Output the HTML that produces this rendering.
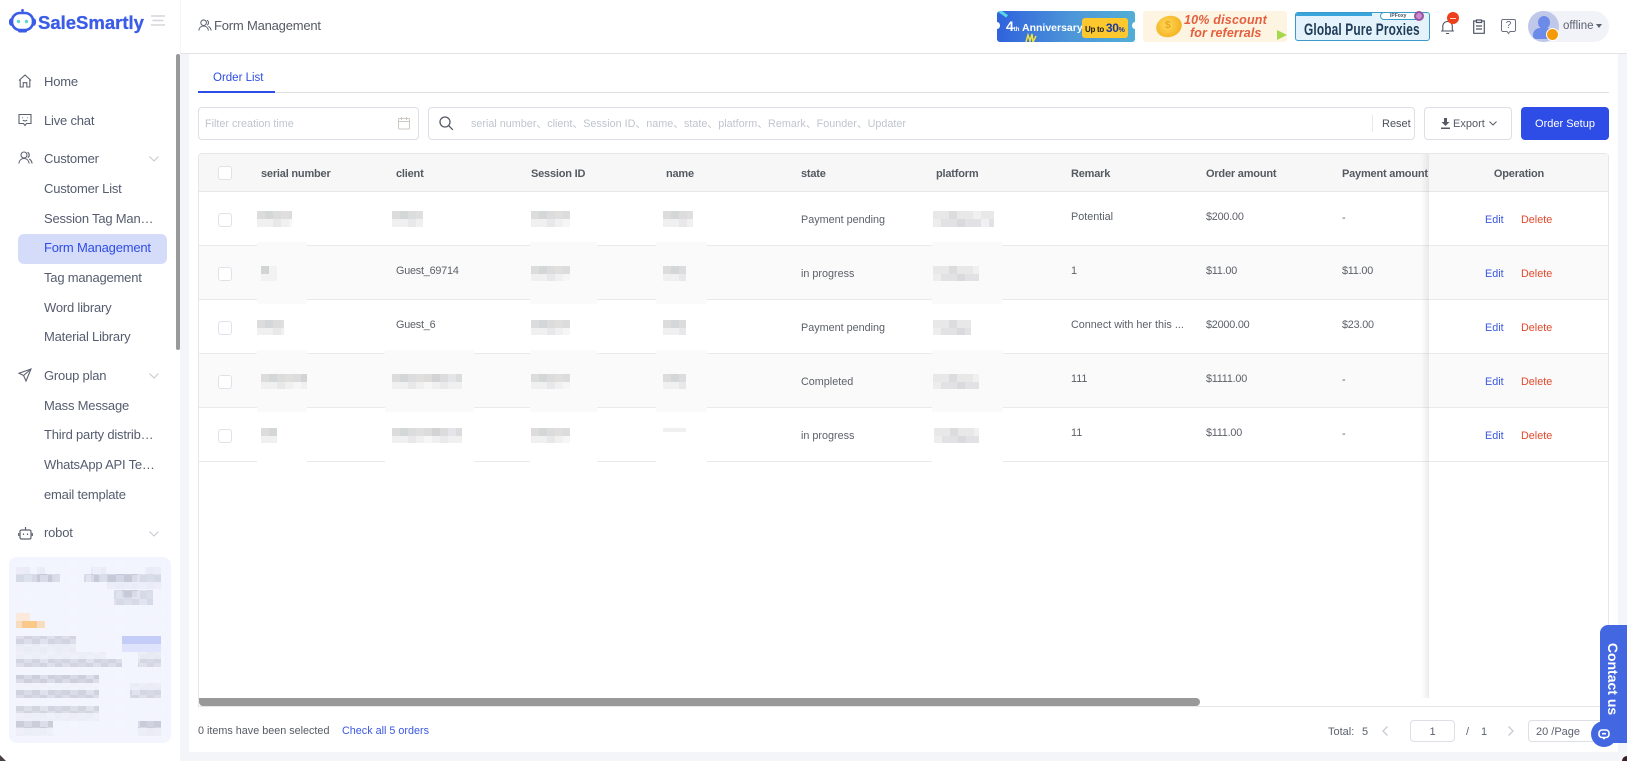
<!DOCTYPE html>
<html lang="en"><head><meta charset="utf-8"><title>Form Management</title>
<style>
*{box-sizing:border-box}
html,body{margin:0;padding:0;width:1627px;height:761px;overflow:hidden;background:#f4f5f8;font-family:"Liberation Sans","Noto Sans CJK SC",sans-serif;color:#5a6070}
.a{position:absolute}
.t{position:absolute;white-space:nowrap;line-height:16px;height:16px}
.n{font-size:13px;letter-spacing:-.2px;color:#545c6e}
.h{font-size:11px;letter-spacing:-.2px;font-weight:bold;color:#555a62}
.c{font-size:10.8px;color:#5c6068}
.d{letter-spacing:-.2px}
.cb{position:absolute;width:14px;height:14px;border:1.5px solid #dfe2ea;border-radius:3px;background:#fff}
.ed{font-size:10.8px;color:#3a58e0}
.de{font-size:10.8px;color:#e0492c}
.box{position:absolute;background:#fff;border:1px solid #dcdfe6;border-radius:4px}
svg{position:absolute;overflow:visible}
</style></head><body>

<!-- main white -->
<div class="a" style="left:189px;top:54px;width:1429px;height:698px;background:#fff"></div>
<!-- sidebar -->
<div class="a" style="left:0;top:0;width:180px;height:761px;background:#fff"></div>
<div class="a" style="left:176px;top:54px;width:4px;height:296px;background:#999;border-radius:2px"></div>
<!-- header -->
<div class="a" style="left:180px;top:0;width:1447px;height:54px;background:#fff;border-bottom:1px solid #e2e3e6;border-left:1px solid #f4f4f6"></div>

<!-- logo -->
<svg style="left:9px;top:9px" width="28" height="24" viewBox="0 0 28 24">
<path d="M13.500 0v4" stroke="#3a5ce6" stroke-width="1.600"/><circle cx="13.500" cy="1.500" r="1.400" fill="#3a5ce6"/>
<rect x="0" y="9" width="27" height="8" rx="3" fill="#3a5ce6"/>
<rect x="3" y="4" width="21" height="17" rx="8" fill="#fff" stroke="#3a5ce6" stroke-width="2.600"/>
<rect x="9" y="21" width="9" height="2.500" rx="1.200" fill="#3a5ce6"/>
<circle cx="9.500" cy="12.500" r="1.700" fill="#5fd6cf"/><circle cx="17.500" cy="12.500" r="1.700" fill="#5fd6cf"/>
</svg>
<div class="t" style="left:38px;top:13px;height:20px;line-height:20px;font-size:18.500px;font-weight:bold;color:#3a5ce6;-webkit-text-stroke:.3px #3a5ce6">SaleSmartly</div>
<svg style="left:151px;top:15px" width="14" height="12"><path d="M0 1h14M1.500 5.500h11M0 10h14" stroke="#d4d6dc" stroke-width="1.500"/></svg>

<!-- sidebar icons -->
<svg style="left:18px;top:74px" width="14" height="14" viewBox="0 0 14 14" fill="none" stroke="#5d6270" stroke-width="1.100"><path d="M1 6.500 7 1l6 5.500M2.200 5.500V13h3V8.700h3.600V13h3V5.500"/></svg>
<svg style="left:18px;top:113px" width="14" height="14" viewBox="0 0 14 14" fill="none" stroke="#5d6270" stroke-width="1.100"><path d="M1 1.500h12v9H8.500L7 12.500 5.500 10.500H1z"/><path d="M4.500 4.500v.8M9.500 4.500v.8M4.800 7.200c1.400 1 3 1 4.400 0"/></svg>
<svg style="left:18px;top:151px" width="15" height="14" viewBox="0 0 15 14" fill="none" stroke="#5d6270" stroke-width="1.100"><circle cx="6" cy="4" r="3"/><path d="M.8 12.500C1.200 9.500 3.200 7.500 6 7.500s4.800 2 5.200 5M9.500 1.300a3 3 0 0 1 .3 5.300M11.200 8c1.600.8 2.600 2.400 2.900 4.500"/></svg>
<svg style="left:18px;top:368px" width="14" height="14" viewBox="0 0 14 14" fill="none" stroke="#5d6270" stroke-width="1.100"><path d="M13 1 1 5.200l4.600 2.300L8 13z"/><path d="M13 1 5.600 7.500"/></svg>
<svg style="left:18px;top:526px" width="15" height="14" viewBox="0 0 15 14" fill="none" stroke="#5d6270" stroke-width="1.200"><rect x="2" y="4" width="11" height="9" rx="1.500"/><path d="M7.500 1v3M.7 7v3M14.300 7v3M5.500 7.500v1.500M9.500 7.500v1.500"/></svg>

<!-- sidebar text -->
<div class="t n" style="left:44px;top:74px">Home</div>
<div class="t n" style="left:44px;top:113px">Live chat</div>
<div class="t n" style="left:44px;top:151px">Customer</div>
<div class="t n" style="left:44px;top:181px">Customer List</div>
<div class="t n" style="left:44px;top:211px">Session Tag Man…</div>
<div class="a" style="left:18px;top:234px;width:149px;height:30px;background:#d5dcfa;border-radius:6px"></div>
<div class="t n" style="left:44px;top:240px;color:#2e4de6">Form Management</div>
<div class="t n" style="left:44px;top:270px">Tag management</div>
<div class="t n" style="left:44px;top:300px">Word library</div>
<div class="t n" style="left:44px;top:329px">Material Library</div>
<div class="t n" style="left:44px;top:368px">Group plan</div>
<div class="t n" style="left:44px;top:398px">Mass Message</div>
<div class="t n" style="left:44px;top:427px">Third party distrib…</div>
<div class="t n" style="left:44px;top:457px">WhatsApp API Te…</div>
<div class="t n" style="left:44px;top:487px">email template</div>
<div class="t n" style="left:44px;top:525px">robot</div>
<svg style="left:149px;top:156px" width="10" height="6" fill="none" stroke="#c8cbd2" stroke-width="1.100"><path d="M.5.500 5 5 9.500.5"/></svg>
<svg style="left:149px;top:373px" width="10" height="6" fill="none" stroke="#c8cbd2" stroke-width="1.100"><path d="M.5.500 5 5 9.500.5"/></svg>
<svg style="left:149px;top:531px" width="10" height="6" fill="none" stroke="#c8cbd2" stroke-width="1.100"><path d="M.5.500 5 5 9.500.5"/></svg>

<!-- promo card mosaic -->
<div class="a" style="left:9px;top:557px;width:162px;height:186px;background:#f3f5fe;border-radius:8px"></div>
<svg style="left:0;top:0" width="180" height="761">
<defs>
<pattern id="v" x="16" y="567" width="46" height="16" patternUnits="userSpaceOnUse">
<rect x="0" y="0" width="8" height="8" fill="#f3f5fe" fill-opacity=".32"/>
<rect x="16" y="0" width="8" height="8" fill="#f3f5fe" fill-opacity=".18"/>
<rect x="31" y="0" width="8" height="8" fill="#f3f5fe" fill-opacity=".38"/>
<rect x="8" y="8" width="8" height="8" fill="#f3f5fe" fill-opacity=".28"/>
<rect x="24" y="8" width="8" height="8" fill="#f3f5fe" fill-opacity=".42"/>
<rect x="39" y="8" width="7" height="8" fill="#f3f5fe" fill-opacity=".15"/>
</pattern>
</defs>
<g fill="#e9ebf6"><rect x="16" y="567" width="14" height="7"/><rect x="37" y="567" width="8" height="7"/><rect x="91" y="567" width="15" height="7"/><rect x="145" y="567" width="16" height="7"/><rect x="107" y="582" width="54" height="7"/></g>
<g fill="#d6d9e6"><rect x="16" y="574" width="44" height="8"/><rect x="84" y="574" width="77" height="8"/><rect x="114" y="590" width="39" height="15"/></g>
<g fill="#c6cad8"><rect x="37" y="574" width="15" height="8"/><rect x="91" y="574" width="8" height="8"/><rect x="107" y="574" width="30" height="8"/><rect x="122" y="590" width="15" height="7"/></g>
<rect x="16" y="636" width="60" height="8" fill="#d2d5e1"/><rect x="16" y="644" width="60" height="8" fill="#e9ebf5"/>
<rect x="16" y="652" width="90" height="7" fill="#eceef7"/><rect x="16" y="659" width="106" height="8" fill="#d2d5e1"/><rect x="138" y="652" width="23" height="7" fill="#e6e8f2"/><rect x="138" y="659" width="23" height="8" fill="#d4d6e2"/>
<rect x="16" y="675" width="83" height="8" fill="#cdd0dc"/><rect x="16" y="683" width="83" height="7" fill="#f0f2fb"/><rect x="16" y="690" width="83" height="8" fill="#d0d3df"/><rect x="130" y="683" width="31" height="7" fill="#e9ebf5"/><rect x="130" y="690" width="31" height="8" fill="#d4d6e2"/>
<rect x="16" y="706" width="83" height="7" fill="#d2d5df"/><rect x="16" y="713" width="83" height="8" fill="#eceef7"/><rect x="16" y="721" width="37" height="7" fill="#cbced9"/><rect x="16" y="728" width="37" height="8" fill="#eceef7"/><rect x="138" y="721" width="23" height="7" fill="#c9ccd8"/><rect x="138" y="728" width="23" height="8" fill="#e9ebf5"/>
<rect x="10" y="560" width="155" height="180" fill="url(#v)"/>
<rect x="16" y="613" width="14" height="8" fill="#fbeadb"/><rect x="16" y="621" width="29" height="7" fill="#f8dcc0"/><rect x="22" y="621" width="15" height="7" fill="#fbc88c"/>
<rect x="122" y="636" width="39" height="8" fill="#c4ccf8"/><rect x="122" y="644" width="39" height="8" fill="#dfe3fb"/>
</svg>

<!-- header content -->
<svg style="left:198px;top:19px" width="14" height="13" viewBox="0 0 15 14" fill="none" stroke="#5d6270" stroke-width="1.100"><circle cx="6" cy="4" r="3"/><path d="M.8 12.500C1.200 9.500 3.200 7.500 6 7.500s4.800 2 5.200 5M9.500 1.300a3 3 0 0 1 .3 5.300M11.200 8c1.600.8 2.600 2.400 2.900 4.500"/></svg>
<div class="t" style="left:214px;top:18px;font-size:13px;letter-spacing:-.2px;color:#555a64">Form Management</div>

<!-- banner 1 -->
<div class="a" style="left:997px;top:11px;width:138px;height:31px;border-radius:3px;background:linear-gradient(90deg,#2f62dc,#4d97d8 55%,#52aed6);overflow:hidden">
<div class="a" style="left:1px;top:1px;width:10px;height:3px;background:#56d6e6;transform:rotate(35deg)"></div>
<div class="t" style="left:9px;top:7px;font-size:10.500px;font-weight:bold;color:#fff"><span style="font-size:14px">4</span><span style="font-size:6px">th</span> Anniversary</div>
<div class="a" style="left:85px;top:7px;width:46px;height:20px;background:#fcc82e;border-radius:3px"></div>
<div class="t" style="left:88px;top:9px;font-size:8px;font-weight:bold;color:#1a1a1a;letter-spacing:-.3px">Up to <span style="font-size:12px;color:#1c3a9e">30<span style="font-size:7px">%</span></span></div>
<svg style="left:28px;top:23px" width="12" height="8" fill="none" stroke="#f2e23c" stroke-width="1.500"><path d="M1 8 3 1l2 6 2-7 1 8 3-6"/></svg>
</div>
<div class="a" style="left:994px;top:22px;width:6px;height:7px;background:#fff;border-radius:50%"></div>
<div class="a" style="left:1132px;top:22px;width:6px;height:7px;background:#fff;border-radius:50%"></div>

<!-- banner 2 -->
<div class="a" style="left:1143px;top:11px;width:144px;height:31px;border-radius:3px;background:#fdf4e2;overflow:hidden">
<div class="a" style="left:13px;top:5px;width:26px;height:21px;border-radius:50%;background:radial-gradient(circle at 45% 40%,#ffd95c,#f5b423 70%,#e89a18);transform:rotate(-18deg)"></div>
<div class="t" style="left:22px;top:7px;font-size:10px;font-weight:bold;color:#e9a51d">$</div>
<div class="t" style="left:41px;top:3px;height:13px;line-height:13px;font-size:12.500px;font-weight:bold;font-style:italic;color:#e35f3e;letter-spacing:.2px">10% discount</div>
<div class="t" style="left:47px;top:16px;height:13px;line-height:13px;font-size:12.500px;font-weight:bold;font-style:italic;color:#e35f3e;letter-spacing:.1px">for referrals</div>
<div class="a" style="left:134px;top:19px;width:0;height:0;border-left:10px solid #a5d84a;border-top:5px solid transparent;border-bottom:5px solid transparent"></div>
</div>

<!-- banner 3 -->
<div class="a" style="left:1295px;top:12px;width:135px;height:29px;border-radius:3px;background:#e4f3fb;border:1px solid #3c9ac8;overflow:hidden">
<div class="a" style="left:0;top:0;width:76px;height:3px;background:#3aa5dc"></div>
<div class="t" style="left:8px;top:9px;font-size:17px;font-weight:bold;color:#1f3b57;transform:scaleX(.7);transform-origin:0 50%;letter-spacing:.2px">Global Pure Proxies</div>
</div>
<div class="a" style="left:1380px;top:12px;width:42px;height:8px;background:#fff;border:1px solid #3c9ac8;border-radius:4px"></div>
<div class="t" style="left:1390px;top:12px;height:8px;line-height:8px;font-size:5px;font-weight:bold;color:#456">IPFoxy</div>
<div class="a" style="left:1414px;top:11px;width:10px;height:10px;border-radius:50%;background:#c98ad0;border:2px solid #94569c"></div>

<!-- top right icons -->
<svg style="left:1440px;top:18px" width="16" height="17" viewBox="0 0 16 17" fill="none" stroke="#4e5564" stroke-width="1.100"><path d="M1 13h13M2.800 13V7.500a4.800 4.800 0 0 1 9.500 0V13M6 15.500h3"/></svg>
<div class="a" style="left:1447px;top:12px;width:12px;height:12px;border-radius:50%;background:#ee3f1d"></div>
<div class="a" style="left:1450px;top:17.500px;width:6px;height:1px;background:#ffd9cc"></div>
<svg style="left:1473px;top:19px" width="12" height="15" viewBox="0 0 12 15" fill="none" stroke="#4e5564" stroke-width="1.200"><path d="M3.500 2H.7v12.300h10.600V2H8.500M3.500 1h5v2.500h-5zM3 7h6M3 10h6"/></svg>
<svg style="left:1501px;top:19px" width="15" height="15" viewBox="0 0 15 15" fill="none" stroke="#6a7080" stroke-width="1"><path d="M2 .5h11a1.500 1.500 0 0 1 1.500 1.500v9a1.500 1.500 0 0 1-1.500 1.500H9L7.500 14.500 6 12.500H2A1.500 1.500 0 0 1 .5 11V2A1.500 1.500 0 0 1 2 .5z"/></svg>
<div class="t" style="left:1505px;top:18px;font-size:10px;color:#5a6070;width:7px;text-align:center">?</div>
<div class="a" style="left:1528px;top:11px;width:81px;height:31px;border-radius:16px;background:#f1f3f9"></div>
<div class="a" style="left:1528px;top:11px;width:31px;height:31px;border-radius:50%;background:#c0c8ea;overflow:hidden">
<div class="a" style="left:10px;top:5px;width:12px;height:13px;border-radius:50%;background:#6c8be8"></div>
<div class="a" style="left:5px;top:17px;width:20px;height:11px;border-radius:7px 7px 3px 3px;background:#6c8be8"></div>
</div>
<div class="a" style="left:1546px;top:28px;width:13px;height:13px;border-radius:50%;background:#f59a0b;border:1px solid #fff"></div>
<div class="t" style="left:1563px;top:18px;font-size:11.500px;color:#5d6270">offline</div>
<div class="a" style="left:1596px;top:24px;width:0;height:0;border-top:4px solid #5d6270;border-left:3.500px solid transparent;border-right:3.500px solid transparent"></div>

<!-- tabs -->
<div class="a" style="left:198px;top:92px;width:1411px;height:1px;background:#dfe0e4"></div>
<div class="a" style="left:198px;top:91px;width:77px;height:2px;background:#2e4de6"></div>
<div class="t" style="left:213px;top:70px;font-size:11.500px;color:#2e4de6">Order List</div>

<!-- filter -->
<div class="box" style="left:198px;top:107px;width:221px;height:33px"></div>
<div class="t" style="left:205px;top:115px;font-size:10.800px;color:#c0c4cc;margin-top:1px">Filter creation time</div>
<svg style="left:398px;top:117px" width="13" height="13" viewBox="0 0 13 13" fill="none" stroke="#cfc9c4" stroke-width="1"><rect x=".5" y="1.500" width="11" height="10.500" rx="1"/><path d="M.5 4.500h11M3.500 0v3M8.500 0v3"/></svg>
<div class="box" style="left:428px;top:107px;width:987px;height:33px"></div>
<svg style="left:439px;top:116px" width="15" height="15" viewBox="0 0 15 15" fill="none" stroke="#555a64" stroke-width="1.300"><circle cx="6" cy="6" r="5"/><path d="m9.800 9.800 4 4"/></svg>
<div class="t" style="left:471px;top:116px;font-size:10.800px;color:#c0c4cc">serial number、client、Session ID、name、state、platform、Remark、Founder、Updater</div>
<div class="a" style="left:1372px;top:115px;width:1px;height:17px;background:#e8e9ec"></div>
<div class="t" style="left:1382px;top:116px;font-size:11px;color:#4a4f58">Reset</div>
<div class="box" style="left:1424px;top:107px;width:88px;height:33px"></div>
<svg style="left:1441px;top:118px" width="9" height="11" viewBox="0 0 9 11" fill="#555a64"><path d="M3 0h3v4h2.500L4.500 8 .5 4H3zM0 9.500h9V11H0z"/></svg>
<div class="t" style="left:1453px;top:115px;font-size:11px;color:#555a64;margin-top:1px">Export</div>
<svg style="left:1489px;top:121px" width="8" height="5" fill="none" stroke="#555a64" stroke-width="1"><path d="M.5.500 4 4 7.500.5"/></svg>
<div class="a" style="left:1521px;top:107px;width:88px;height:33px;background:#2e4de6;border-radius:4px"></div>
<div class="t" style="left:1521px;top:116px;width:88px;text-align:center;font-size:11px;color:#fff">Order Setup</div>

<!-- table -->
<div class="a" style="left:198px;top:153px;width:1411px;height:554px;border:1px solid #e6e7ea;border-radius:4px 4px 0 0"></div>
<div class="a" style="left:199px;top:154px;width:1409px;height:38px;background:#f7f7f7;border-bottom:1px solid #e6e7ea;border-radius:4px 4px 0 0"></div>
<div class="a" style="left:199px;top:245px;width:1409px;height:1px;background:#e9eaec"></div>
<div class="a" style="left:199px;top:246px;width:1409px;height:53px;background:#fafafa"></div>
<div class="a" style="left:199px;top:299px;width:1409px;height:1px;background:#e9eaec"></div>
<div class="a" style="left:199px;top:353px;width:1409px;height:1px;background:#e9eaec"></div>
<div class="a" style="left:199px;top:354px;width:1409px;height:53px;background:#fafafa"></div>
<div class="a" style="left:199px;top:407px;width:1409px;height:1px;background:#e9eaec"></div>
<div class="a" style="left:199px;top:461px;width:1409px;height:1px;background:#e9eaec"></div>

<!-- blur patches and mosaics -->
<svg style="left:0;top:0" width="1627" height="761">
<defs>
<pattern id="m" width="64" height="16" patternUnits="userSpaceOnUse">
<rect width="64" height="8" fill="#dcdcdc"/><rect y="8" width="64" height="8" fill="#f0f0f0"/>
<rect x="8" width="8" height="8" fill="#d4d7d8"/><rect x="24" width="8" height="8" fill="#e0dfde"/><rect x="40" width="8" height="8" fill="#d3d3d6"/><rect x="56" width="8" height="8" fill="#e4e5e8"/>
<rect x="16" y="8" width="8" height="8" fill="#e8e8ea"/><rect x="32" y="8" width="8" height="8" fill="#f6f6f6"/><rect x="48" y="8" width="8" height="8" fill="#eaeaec"/>
</pattern>
<pattern id="p" width="64" height="16" patternUnits="userSpaceOnUse">
<rect width="64" height="8" fill="#e8e8e8"/><rect y="8" width="64" height="8" fill="#e2e2e4"/>
<rect x="16" width="8" height="8" fill="#dcdcdf"/><rect x="40" width="8" height="8" fill="#f0f0f0"/>
<rect y="8" width="8" height="8" fill="#ededed"/><rect x="24" y="8" width="8" height="8" fill="#d9dadd"/><rect x="48" y="8" width="8" height="8" fill="#f0f0f2"/>
</pattern>
</defs>
<g fill="#fafafa">
<rect x="257" y="242" width="50" height="62"/><rect x="530" y="242" width="67" height="62"/><rect x="656" y="242" width="51" height="62"/><rect x="932" y="242" width="70" height="62"/>
<rect x="257" y="350" width="50" height="62"/><rect x="385" y="350" width="89" height="62"/><rect x="530" y="350" width="67" height="62"/><rect x="656" y="350" width="51" height="62"/><rect x="932" y="350" width="71" height="62"/>
</g>
<g fill="#fff">
<rect x="257" y="458" width="50" height="8"/><rect x="385" y="458" width="89" height="8"/><rect x="530" y="458" width="67" height="8"/><rect x="656" y="458" width="51" height="8"/><rect x="932" y="458" width="71" height="8"/>
</g>
<g fill="url(#m)">
<rect transform="translate(257 211)" width="35" height="16"/><rect transform="translate(392 211)" width="31" height="16"/><rect transform="translate(531 211)" width="39" height="16"/><rect transform="translate(663 211)" width="30" height="16"/>
<rect transform="translate(531 266)" width="39" height="15"/><rect transform="translate(663 266)" width="23" height="15"/>
<rect transform="translate(257 320)" width="27" height="15"/><rect transform="translate(531 320)" width="39" height="15"/><rect transform="translate(663 320)" width="23" height="15"/>
<rect transform="translate(261 374)" width="46" height="15"/><rect transform="translate(392 374)" width="70" height="15"/><rect transform="translate(531 374)" width="39" height="15"/><rect transform="translate(663 374)" width="23" height="15"/>
<rect transform="translate(261 428)" width="16" height="15"/><rect transform="translate(392 428)" width="70" height="15"/><rect transform="translate(531 428)" width="39" height="15"/>
</g>
<rect x="261" y="266" width="16" height="15" fill="#f2f2f3"/>
<rect x="261" y="266" width="8" height="8" fill="#d2d3d5"/>
<g fill="url(#p)">
<rect transform="translate(933 211)" width="61" height="16"/><rect transform="translate(933 266)" width="46" height="15"/><rect transform="translate(933 320)" width="38" height="15"/><rect transform="translate(933 374)" width="46" height="15"/><rect transform="translate(934 428)" width="45" height="15"/>
</g>
<rect x="663" y="428" width="23" height="4" fill="#f0f0f1"/>
</svg>

<!-- header row -->
<div class="cb" style="left:218px;top:166px"></div>
<div class="t h" style="left:261px;top:166px">serial number</div>
<div class="t h" style="left:396px;top:166px">client</div>
<div class="t h" style="left:531px;top:166px">Session ID</div>
<div class="t h" style="left:666px;top:166px">name</div>
<div class="t h" style="left:801px;top:166px">state</div>
<div class="t h" style="left:936px;top:166px">platform</div>
<div class="t h" style="left:1071px;top:166px">Remark</div>
<div class="t h" style="left:1206px;top:166px">Order amount</div>
<div class="t h" style="left:1342px;top:166px">Payment amount</div>

<!-- rows -->
<div class="cb" style="left:218px;top:213px"></div>
<div class="cb" style="left:218px;top:267px"></div>
<div class="cb" style="left:218px;top:321px"></div>
<div class="cb" style="left:218px;top:375px"></div>
<div class="cb" style="left:218px;top:429px"></div>

<div class="t c" style="left:801px;top:212px">Payment pending</div>
<div class="t c" style="left:801px;top:266px">in progress</div>
<div class="t c" style="left:801px;top:320px">Payment pending</div>
<div class="t c" style="left:801px;top:374px">Completed</div>
<div class="t c" style="left:801px;top:428px">in progress</div>

<div class="t c d" style="left:396px;top:263px">Guest_69714</div>
<div class="t c d" style="left:396px;top:317px">Guest_6</div>

<div class="t c" style="left:1071px;top:209px">Potential</div>
<div class="t c" style="left:1071px;top:263px">1</div>
<div class="t c" style="left:1071px;top:317px">Connect with her this ...</div>
<div class="t c" style="left:1071px;top:371px">111</div>
<div class="t c" style="left:1071px;top:425px">11</div>

<div class="t c d" style="left:1206px;top:209px">$200.00</div>
<div class="t c d" style="left:1206px;top:263px">$11.00</div>
<div class="t c d" style="left:1206px;top:317px">$2000.00</div>
<div class="t c d" style="left:1206px;top:371px">$1111.00</div>
<div class="t c d" style="left:1206px;top:425px">$111.00</div>

<div class="t c" style="left:1342px;top:210px">-</div>
<div class="t c d" style="left:1342px;top:263px">$11.00</div>
<div class="t c d" style="left:1342px;top:317px">$23.00</div>
<div class="t c" style="left:1342px;top:372px">-</div>
<div class="t c" style="left:1342px;top:426px">-</div>

<!-- fixed column -->
<div class="a" style="left:1421px;top:154px;width:8px;height:544px;background:linear-gradient(90deg,rgba(0,0,0,0),rgba(0,0,0,.07))"></div>
<div class="a" style="left:1429px;top:154px;width:179px;height:544px;background:#fff"></div>
<div class="a" style="left:1429px;top:154px;width:179px;height:38px;background:#f7f7f7;border-bottom:1px solid #e6e7ea"></div>
<div class="a" style="left:1429px;top:245px;width:179px;height:1px;background:#e9eaec"></div>
<div class="a" style="left:1429px;top:246px;width:179px;height:53px;background:#fafafa"></div>
<div class="a" style="left:1429px;top:299px;width:179px;height:1px;background:#e9eaec"></div>
<div class="a" style="left:1429px;top:353px;width:179px;height:1px;background:#e9eaec"></div>
<div class="a" style="left:1429px;top:354px;width:179px;height:53px;background:#fafafa"></div>
<div class="a" style="left:1429px;top:407px;width:179px;height:1px;background:#e9eaec"></div>
<div class="a" style="left:1429px;top:461px;width:179px;height:1px;background:#e9eaec"></div>
<div class="t h" style="left:1429px;top:166px;width:180px;text-align:center">Operation</div>

<div class="t ed" style="left:1485px;top:212px">Edit</div><div class="t de" style="left:1521px;top:212px">Delete</div>
<div class="t ed" style="left:1485px;top:266px">Edit</div><div class="t de" style="left:1521px;top:266px">Delete</div>
<div class="t ed" style="left:1485px;top:320px">Edit</div><div class="t de" style="left:1521px;top:320px">Delete</div>
<div class="t ed" style="left:1485px;top:374px">Edit</div><div class="t de" style="left:1521px;top:374px">Delete</div>
<div class="t ed" style="left:1485px;top:428px">Edit</div><div class="t de" style="left:1521px;top:428px">Delete</div>

<!-- h scrollbar -->
<div class="a" style="left:199px;top:698px;width:1001px;height:8px;background:#999;border-radius:0 4px 4px 4px"></div>

<!-- footer -->
<div class="t" style="left:198px;top:723px;font-size:10.800px;color:#555a64">0 items have been selected</div>
<div class="t" style="left:342px;top:723px;font-size:10.800px;color:#3a58e0">Check all 5 orders</div>
<div class="t" style="left:1328px;top:724px;font-size:11px;color:#5c6270">Total:</div>
<div class="t" style="left:1362px;top:724px;font-size:11px;color:#5c6270">5</div>
<svg style="left:1382px;top:726px" width="6" height="10" fill="none" stroke="#c8cbd2" stroke-width="1.300"><path d="M5.500.5 1 5l4.500 4.500"/></svg>
<div class="box" style="left:1410px;top:720px;width:45px;height:22px"></div>
<div class="t" style="left:1410px;top:724px;width:45px;text-align:center;font-size:11px;color:#5c6270">1</div>
<div class="t" style="left:1466px;top:724px;font-size:11px;color:#5c6270">/</div>
<div class="t" style="left:1481px;top:724px;font-size:11px;color:#5c6270">1</div>
<svg style="left:1508px;top:726px" width="6" height="10" fill="none" stroke="#c8cbd2" stroke-width="1.300"><path d="M.5.500 5 5 .5 9.500"/></svg>
<div class="box" style="left:1528px;top:720px;width:76px;height:22px"></div>
<div class="t" style="left:1536px;top:724px;font-size:11px;color:#5c6270">20 /Page</div>

<!-- contact us -->
<div class="a" style="left:1600px;top:625px;width:27px;height:118px;background:#4267e0;border-radius:8px 0 0 0"></div>
<div class="t" style="left:1573px;top:671px;width:80px;height:16px;text-align:center;transform:rotate(90deg);font-size:14px;font-weight:bold;color:#fff">Contact us</div>
<div class="a" style="left:1591px;top:721px;width:26px;height:26px;border-radius:50%;background:#4267e0"></div>
<svg style="left:1598px;top:729px" width="12" height="11" fill="none" stroke="#fff" stroke-width="1.600"><rect x="1" y="1" width="10" height="7.500" rx="3"/><path d="M4 4.700h4M5 9.500h2"/></svg>
<div class="a" style="left:1622px;top:756px;width:5px;height:5px;background:#3a1f28;border-radius:5px 0 0 0"></div>
<div class="a" style="left:0;top:755px;width:6px;height:6px;background:#4a4048;clip-path:polygon(0 0,100% 100%,0 100%)"></div>
</body></html>
